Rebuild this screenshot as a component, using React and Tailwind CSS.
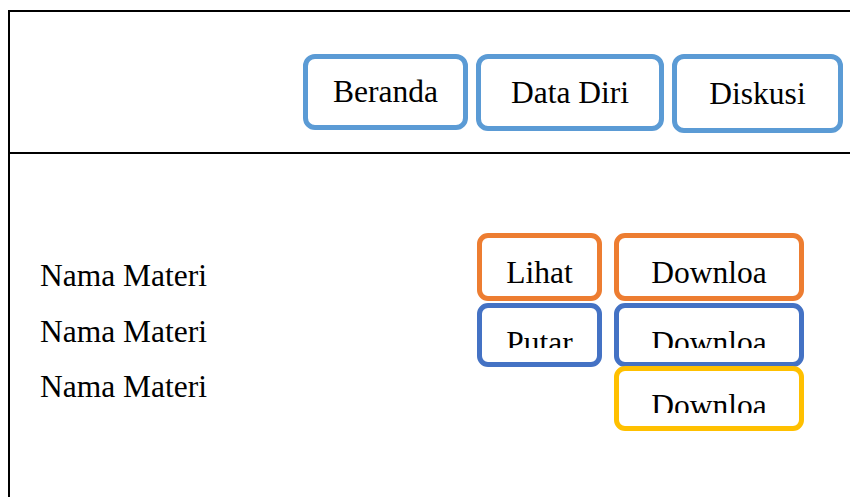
import React from "react";

const navItems = [
  { label: "Beranda", w: "w-[165px]", h: "h-[76px]" },
  { label: "Data Diri", w: "w-[188px]", h: "h-[77px]" },
  { label: "Diskusi", w: "w-[171px]", h: "h-[79px]" },
];

function NavButton({ label, w, h }) {
  return (
    <div
      className={`${w} ${h} flex items-center justify-center rounded-[12px] border-[5px] border-[#5b9bd5] bg-white leading-none text-black`}
    >
      {label}
    </div>
  );
}

// kotak aksi: teksnya terpotong di bagian bawah seperti text box Word
function ActionBox({ label, color, w, h, clip }) {
  return (
    <div className={`${w} ${h} rounded-[11px] border-[5px] ${color} bg-white`}>
      <div className={`${clip} overflow-hidden pt-[19px]`}>
        <div className="text-center leading-none text-black">{label}</div>
      </div>
    </div>
  );
}

export default function App() {
  return (
    <div
      className="h-[497px] w-[850px] overflow-hidden bg-white pt-[10px] pl-[8px] text-[31.5px]"
      style={{ fontFamily: '"Liberation Serif", "Times New Roman", serif' }}
    >
      <div className="h-[487px] border-t-2 border-l-2 border-black">
        <header className="flex h-[142px] items-start gap-2 border-b-2 border-black pt-[42px] pl-[293px]">
          {navItems.map((item) => (
            <NavButton key={item.label} {...item} />
          ))}
        </header>

        <section className="flex pl-[30px]">
          <div className="w-[437px] pt-[94px] leading-[55.5px] text-black">
            <p>Nama Materi</p>
            <p>Nama Materi</p>
            <p>Nama Materi</p>
          </div>

          <div className="grid grid-cols-[125px_190px] gap-x-[12px] pt-[79px]">
            <ActionBox label="Lihat" color="border-[#ed7d31]" w="w-[125px]" h="h-[68px]" clip="h-[45px]" />
            <ActionBox label="Downloa" color="border-[#ed7d31]" w="w-[190px]" h="h-[68px]" clip="h-[45px]" />
            <div className="mt-[2px]">
              <ActionBox label="Putar" color="border-[#4472c4]" w="w-[125px]" h="h-[64px]" clip="h-[40px]" />
            </div>
            <div className="mt-[2px]">
              <ActionBox label="Downloa" color="border-[#4472c4]" w="w-[190px]" h="h-[64px]" clip="h-[40px]" />
            </div>
            <div />
            <div className="-mt-[1px]">
              <ActionBox label="Downloa" color="border-[#ffc000]" w="w-[190px]" h="h-[65px]" clip="h-[42px]" />
            </div>
          </div>
        </section>
      </div>
    </div>
  );
}
